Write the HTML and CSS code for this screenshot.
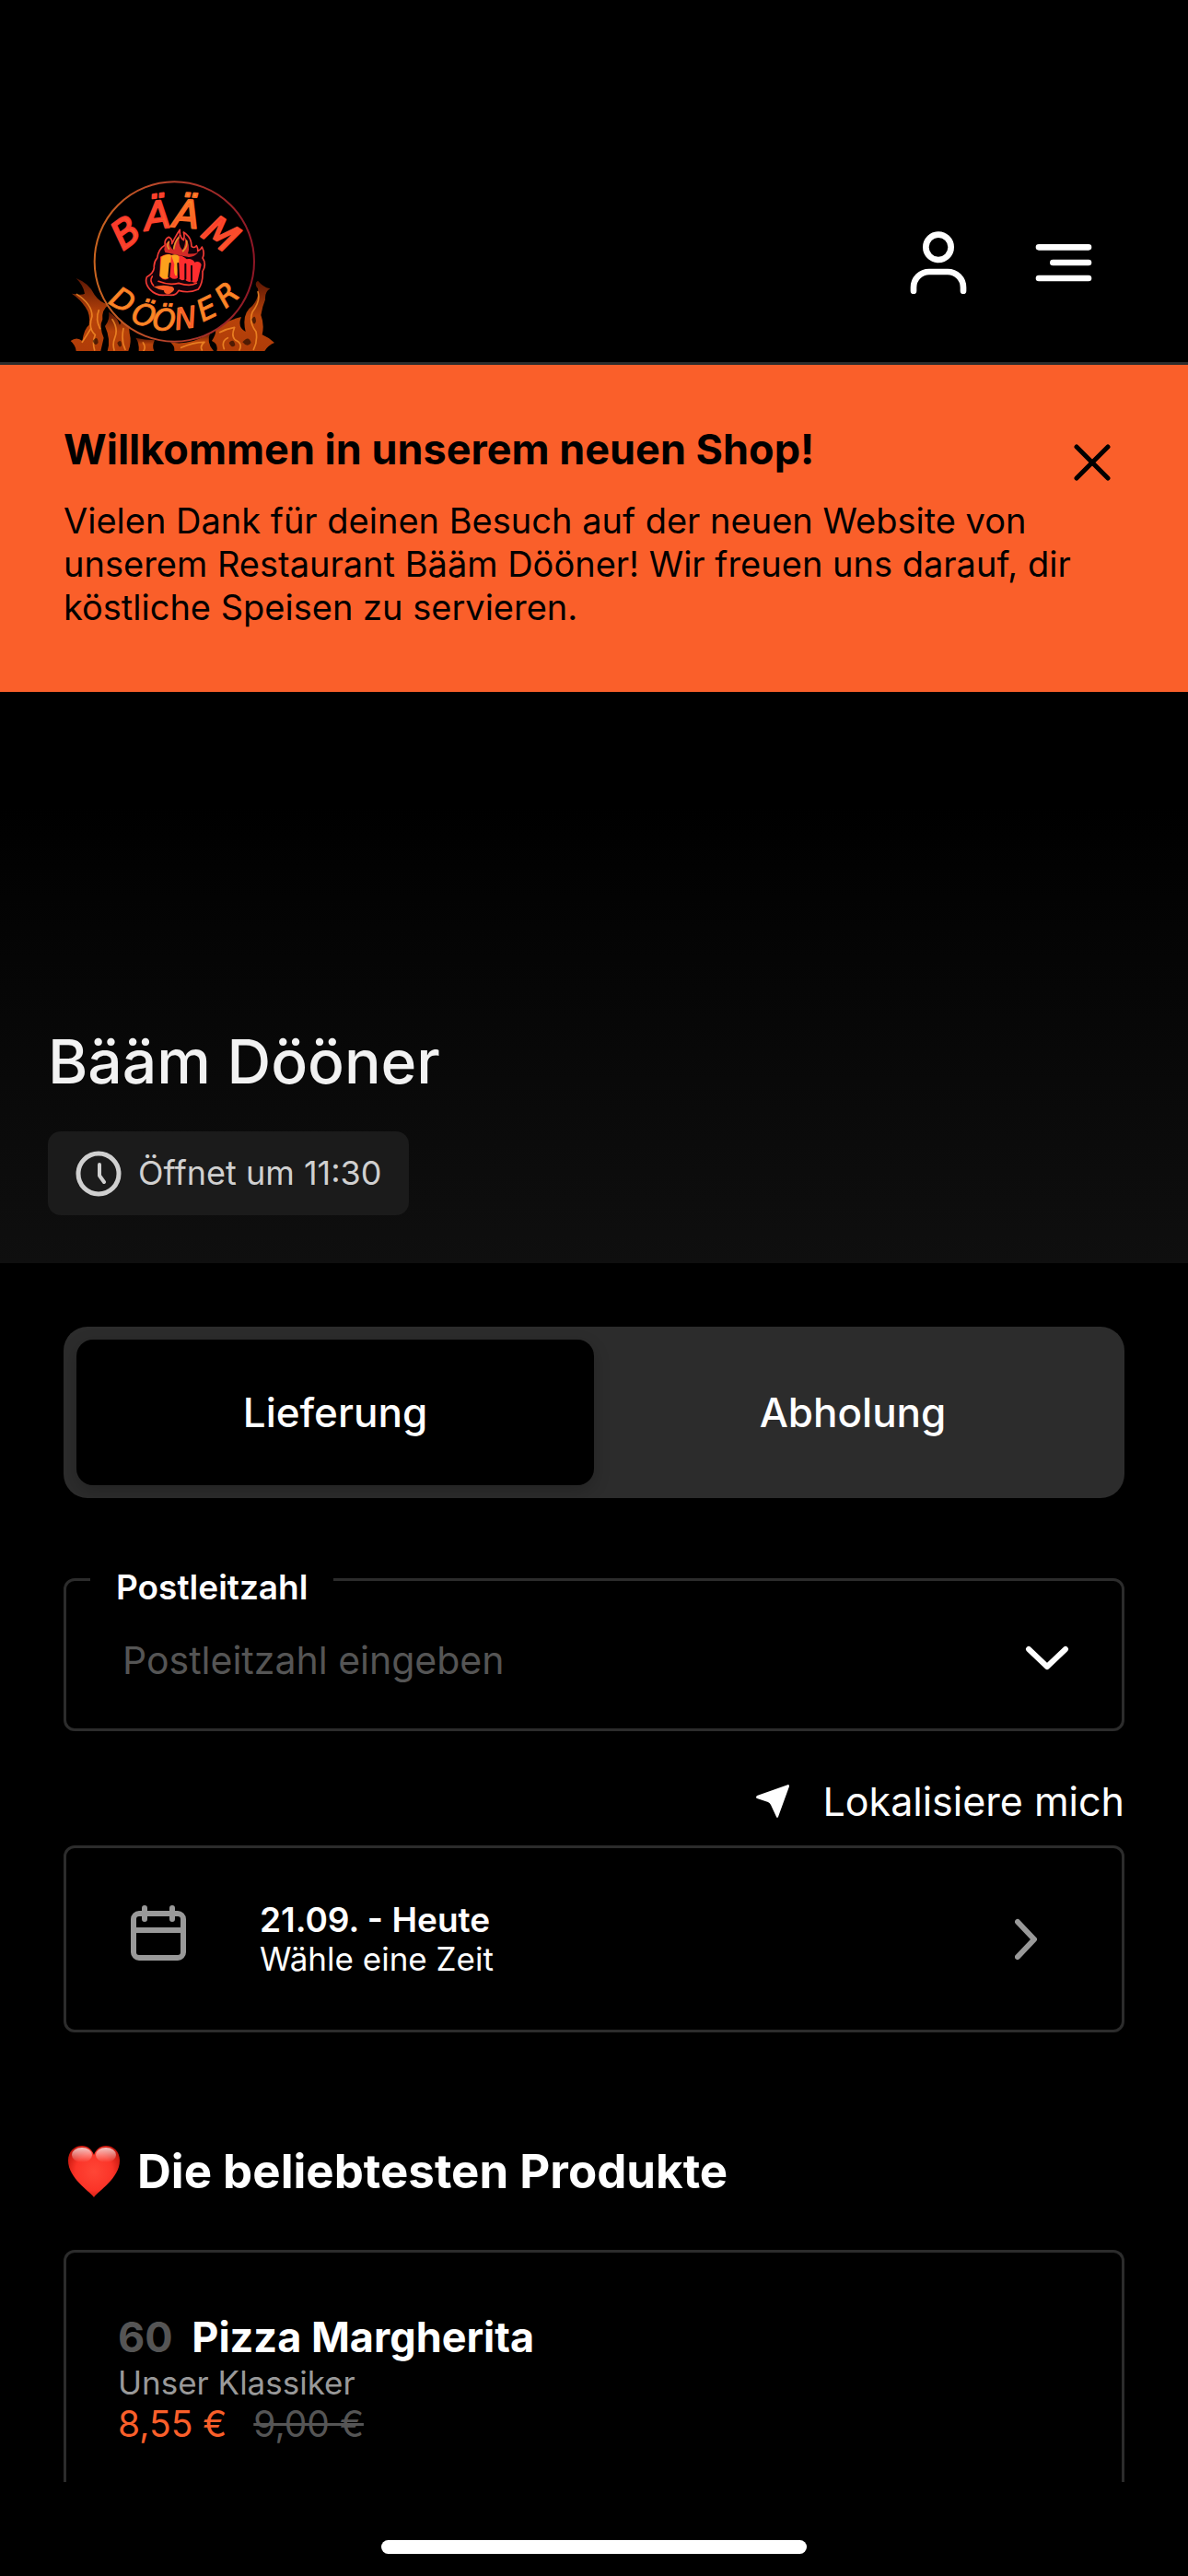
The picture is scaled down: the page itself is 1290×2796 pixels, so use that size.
FILE: index.html
```html
<!DOCTYPE html>
<html lang="de">
<head>
    <meta charset="UTF-8">
    <meta name="viewport" content="width=device-width, initial-scale=1">
    <title>Bääm Dööner</title>
    <link rel="stylesheet" href="styles.css">
</head>
<body>
    <header class="site-header">
        <a class="logo-link" href="#" aria-label="Bääm Dööner">
            <svg class="logo" viewBox="60 78 690 555" aria-hidden="true">
                <defs>
                    <linearGradient id="ring" x1="0" y1="0" x2="1" y2="0">
                        <stop offset="0" stop-color="#c9641f"/>
                        <stop offset="0.45" stop-color="#b8432c"/>
                        <stop offset="1" stop-color="#8e1626"/>
                    </linearGradient>
                    <linearGradient id="flame" x1="0" y1="0" x2="0" y2="1">
                        <stop offset="0" stop-color="#5a1604"/>
                        <stop offset="0.5" stop-color="#b8430a"/>
                        <stop offset="1" stop-color="#b03c08"/>
                    </linearGradient>
                    <linearGradient id="letter" x1="0" y1="0" x2="1" y2="1">
                        <stop offset="0" stop-color="#fb2c2c"/>
                        <stop offset="1" stop-color="#f9682a"/>
                    </linearGradient>
                    <linearGradient id="letterWarm" x1="0" y1="0" x2="0" y2="1">
                        <stop offset="0" stop-color="#fb9a22"/>
                        <stop offset="1" stop-color="#fb3a2a"/>
                    </linearGradient>
                </defs>
                <g fill="url(#flame)">
                    <path d="M80 600 Q100 585 118 600 Q124 560 140 548 Q146 515 128 490 Q112 465 84 446 Q118 452 126 446 Q122 420 98 396 Q140 412 158 450 Q176 476 204 482 Q180 500 184 530 Q172 552 188 590 L178 633 H98 Q96 614 80 600Z"/>
                    <path d="M192 552 Q210 528 204 506 Q232 520 240 548 Q250 530 246 510 Q272 540 272 575 Q280 604 268 633 H200 Q212 596 192 552Z"/>
                    <path d="M292 590 Q320 596 354 598 Q344 616 352 633 H302 Q304 606 292 590Z"/>
                    <path d="M404 604 Q440 612 480 600 Q510 590 536 570 Q520 606 546 633 H418 Q420 616 404 604Z"/>
                    <path d="M540 600 Q560 570 548 556 Q590 534 636 522 Q622 556 650 570 Q636 510 672 486 Q694 460 690 430 Q676 412 690 404 Q706 424 730 430 Q712 440 714 466 Q704 490 700 516 Q712 548 704 580 Q728 590 744 606 Q724 614 712 633 H556 Q562 610 540 600Z"/>
                </g>
                <g fill="none" stroke="#ff9a2c" stroke-width="5" stroke-linecap="round" opacity="0.7">
                    <path d="M100 448 Q150 480 150 520 Q136 560 160 580 Q150 605 158 630"/>
                    <path d="M118 604 Q134 580 146 560 M172 500 Q160 530 176 560"/>
                    <path d="M216 530 Q236 560 224 590 Q216 610 222 630 M252 560 Q244 600 258 628"/>
                    <path d="M316 606 Q326 620 318 632 M440 622 Q480 604 516 604 Q500 616 508 630"/>
                    <path d="M566 572 Q590 560 614 556 Q600 590 622 600 Q640 610 630 630"/>
                    <path d="M690 440 Q700 470 672 506 Q660 540 684 570 Q690 600 676 628 M580 626 Q570 600 592 590"/>
                </g>
                <g fill="#000" opacity="0.55">
                    <path d="M152 600 Q168 580 170 606 Q160 620 152 600Z"/>
                    <path d="M232 606 Q246 590 246 616 Q238 626 232 606Z"/>
                    <path d="M640 604 Q660 580 668 606 Q656 624 640 604Z"/>
                    <path d="M596 606 Q612 590 616 614 Q604 626 596 606Z"/>
                    <path d="M670 530 Q682 510 684 536 Q678 556 670 530Z"/>
                </g>
                <circle cx="418" cy="342" r="260" fill="#000" stroke="url(#ring)" stroke-width="6"/>
                <g class="logo-letters">
                    <text x="-42" y="45" transform="translate(258 246) rotate(-36)" fill="url(#letter)" stroke="#fb3a2c">B</text>
                    <text x="-43" y="45" transform="translate(362 190) rotate(-8)" fill="url(#letter)" stroke="#fb402c">Ä</text>
                    <text x="-43" y="45" transform="translate(458 186) rotate(4)" fill="url(#letterWarm)" stroke="#fb6a26">Ä</text>
                    <text x="-53" y="45" transform="translate(570 250) rotate(34)" fill="url(#letter)" stroke="#fb4a2c">M</text>
                </g>
                <g class="logo-letters logo-letters-small" fill="#f98a22" stroke="#f9782a">
                    <text x="-37" y="35" transform="translate(250 466) rotate(32)">D</text>
                    <text x="-37" y="35" transform="translate(318 514) rotate(14)">Ö</text>
                    <text x="-37" y="35" transform="translate(384 530) rotate(2)">Ö</text>
                    <text x="-36" y="35" transform="translate(454 524) rotate(-8)" fill="#fb5a2a">N</text>
                    <text x="-30" y="35" transform="translate(522 494) rotate(-26)">E</text>
                    <text x="-33" y="35" transform="translate(588 448) rotate(-40)">R</text>
                </g>
                <!-- burning fist -->
                <path d="M362 330 Q366 300 388 288 Q384 270 400 262 Q412 268 410 284 Q420 262 436 238 Q434 262 448 272 Q452 260 448 246 Q474 262 474 292 Q482 300 490 290 Q496 300 494 308 Q504 304 508 294 Q518 314 510 330 Q524 350 510 374 Q512 410 496 432 Q466 446 432 436 Q422 456 396 450 Q360 456 340 434 Q320 414 328 392 Q350 380 352 362 Q350 344 362 330Z" fill="#12020a" stroke="#f23a34" stroke-width="5" stroke-linejoin="round"/>
                <path d="M388 312 Q378 290 402 272 Q400 294 416 304 Q412 280 436 252 Q428 288 444 304 Q456 290 452 262 Q472 288 462 316 Q480 318 496 312 Q480 330 460 326 Q424 320 388 312Z" fill="#d42a26"/>
                <path d="M416 300 Q420 276 432 264 M446 308 Q462 292 458 274 M400 300 Q392 288 400 278" fill="none" stroke="#e0962c" stroke-width="5" stroke-linecap="round"/>
                <path d="M372 326 Q390 314 408 320 L432 322 Q444 322 458 334 Q476 330 484 344 Q500 338 506 352 L494 404 Q486 416 474 406 Q462 412 452 400 Q440 408 430 394 Q418 404 404 392 Q388 410 370 390Z" fill="#fd2c2e"/>
                <path d="M376 326 Q400 312 408 322 L402 392 Q384 406 370 388Z M408 322 Q424 314 434 326 L432 350 L426 388 Q414 390 418 350Z" fill="#fda01c"/>
                <path d="M404 348 L400 392 M430 348 L432 394 M454 350 L454 398 M474 356 L474 402" stroke="#12020a" stroke-width="6" fill="none"/>
                <path d="M350 424 Q384 414 412 424 Q426 434 404 446 Q384 450 384 436 Q366 434 350 424Z" fill="#fb5a26"/>
                <path d="M346 390 Q336 404 350 420 M366 406 Q400 420 432 412 Q470 424 490 412" fill="none" stroke="#fb3a2a" stroke-width="5" stroke-linecap="round"/>
            </svg>
        </a>
        <nav class="header-actions" aria-label="Navigation">
            <button class="icon-button" type="button" aria-label="Konto">
                <svg class="icon-large" viewBox="127 85 216 216" aria-hidden="true">
                    <circle cx="235" cy="143" r="41"/>
                    <path d="M154 285 V274 A51 51 0 0 1 205 223 H265 A51 51 0 0 1 316 274 V285"/>
                </svg>
            </button>
            <button class="icon-button" type="button" aria-label="Menü">
                <svg class="icon-large" viewBox="536 85 216 216" aria-hidden="true">
                    <path d="M563 143 H725 M609 193 H725 M563 244 H725"/>
                </svg>
            </button>
        </nav>
    </header>

    <section class="banner">
        <div class="banner-text">
            <h2>Willkommen in unserem neuen Shop!</h2>
            <p>Vielen Dank für deinen Besuch auf der neuen Website von unserem Restaurant Bääm Dööner! Wir freuen uns darauf, dir köstliche Speisen zu servieren.</p>
        </div>
        <button class="icon-button banner-close" type="button" aria-label="Schließen">
            <svg viewBox="0 0 48 48" aria-hidden="true"><path d="M7 7 L41 41 M41 7 L7 41"/></svg>
        </button>
    </section>

    <section class="hero">
        <h1>Bääm Dööner</h1>
        <div class="opening">
            <svg viewBox="0 0 50 50" aria-hidden="true">
                <circle cx="25" cy="25" r="22"/>
                <path class="clock-hands" d="M26 15 V27 L31 34"/>
            </svg>
            <span>Öffnet um 11:30</span>
        </div>
    </section>

    <main>
        <div class="segment">
            <button class="segment-item active" type="button">Lieferung</button>
            <button class="segment-item" type="button">Abholung</button>
        </div>

        <div class="field">
            <label for="plz">Postleitzahl</label>
            <input id="plz" name="plz" type="text" placeholder="Postleitzahl eingeben">
            <svg class="field-arrow" viewBox="0 0 48 48" aria-hidden="true"><path d="M4 14 L24 33 L44 14"/></svg>
        </div>

        <button class="locate" type="button">
            <svg viewBox="0 0 36 36" aria-hidden="true"><path d="M35 0 Q36 0 36 2 L24 35 Q23 37 22 35 L16 22 Q15 20 13 19 L1 15 Q-1 14 1 12Z"/></svg>
            <span>Lokalisiere mich</span>
        </button>

        <button class="time-card" type="button">
            <svg class="calendar" viewBox="0 0 60 60" aria-hidden="true">
                <rect x="3" y="9" width="54" height="48" rx="6"/>
                <path d="M3 27 H57 M15 3 V15 M45 3 V15"/>
            </svg>
            <span class="time-text">
                <strong>21.09. - Heute</strong>
                <span>Wähle eine Zeit</span>
            </span>
            <svg class="time-arrow" viewBox="0 0 24 48" aria-hidden="true"><path d="M3 5 L21 24 L3 43"/></svg>
        </button>

        <h2 class="section-title">
            <svg viewBox="0 0 58 58" aria-hidden="true">
                <defs>
                    <radialGradient id="heart" cx="0.5" cy="0.5" r="0.6">
                        <stop offset="0" stop-color="#ff4636"/>
                        <stop offset="0.6" stop-color="#fb3428"/>
                        <stop offset="1" stop-color="#c0140a"/>
                    </radialGradient>
                    <linearGradient id="shine" x1="0" y1="0" x2="0" y2="1">
                        <stop offset="0" stop-color="#fff" stop-opacity="0.75"/>
                        <stop offset="1" stop-color="#fff" stop-opacity="0"/>
                    </linearGradient>
                </defs>
                <path fill="url(#heart)" d="M29 57 C24 50 1 36 1 17 C1 7 8 1 16 1 C22 1 27 5 29 11 C31 5 36 1 42 1 C50 1 57 7 57 17 C57 36 34 50 29 57Z"/>
                <ellipse cx="16" cy="11" rx="11" ry="8" fill="url(#shine)"/>
                <ellipse cx="42" cy="11" rx="11" ry="8" fill="url(#shine)"/>
            </svg>
            Die beliebtesten Produkte
        </h2>

        <article class="product">
            <h3><span class="product-number">60</span> Pizza Margherita</h3>
            <p class="product-info">Unser Klassiker</p>
            <p class="product-price"><span>8,55 €</span> <s>9,00 €</s></p>
        </article>
    </main>

    <footer class="home-bar"><span></span></footer>
</body>
</html>
```
FILE: styles.css
```css
* {
    margin: 0;
    padding: 0;
    box-sizing: border-box;
}

body {
    min-height: 100vh;
    display: flex;
    flex-direction: column;
    background: #000;
    color: #fff;
    font-family: Inter, "Liberation Sans", sans-serif;
    font-size: 36px;
}

button {
    font: inherit;
    color: inherit;
    background: none;
    border: none;
    cursor: pointer;
}

svg {
    display: block;
    flex: none;
    fill: none;
    stroke-linecap: round;
    stroke-linejoin: round;
}

/* Header */
.site-header {
    display: flex;
    justify-content: space-between;
    align-items: center;
    padding: 196px 99px 12px 70px;
    border-bottom: 3px solid #2c2c2c;
}
.logo { width: 230px; height: 185px; }
.logo-letters {
    font-family: "DejaVu Sans", sans-serif;
    font-style: oblique;
    font-size: 124px;
    stroke-width: 6px;
}
.logo-letters-small { font-size: 96px; stroke-width: 3px; }
.header-actions { display: flex; gap: 64px; margin-bottom: 8px; }
.icon-large {
    width: 72px;
    height: 72px;
    stroke: #fff;
    stroke-width: 20;
}

/* Welcome banner */
.banner {
    display: flex;
    justify-content: space-between;
    align-items: flex-start;
    padding: 64px 80px 68px 69px;
    background: #fa5f2a;
    color: #000;
}
.banner-text { width: 1104px; }
.banner h2 {
    font-size: 45px;
    line-height: 56px;
    font-weight: 700;
    margin-bottom: 26px;
}
.banner p { font-size: 38px; line-height: 47px; }
.banner-close { margin-top: 18px; margin-left: -48px; }
.banner-close svg {
    width: 48px;
    height: 48px;
    stroke: #000;
    stroke-width: 5;
}

/* Hero */
.hero {
    display: flex;
    flex-direction: column;
    align-items: flex-start;
    justify-content: flex-end;
    gap: 34px;
    min-height: 620px;
    padding: 52px;
    background: linear-gradient(#000 20%, #0f0f0f);
}
.hero h1 {
    color: #f2f2f2;
    font-size: 66px;
    line-height: 84px;
    font-weight: 500;
}
.opening {
    display: flex;
    align-items: center;
    gap: 18px;
    padding: 20px 30px;
    background: #1b1b1b;
    border-radius: 14px;
    color: #d0d0d0;
    line-height: 51px;
}
.opening svg {
    width: 50px;
    height: 50px;
    stroke: #d0d0d0;
    stroke-width: 5;
}
.clock-hands { stroke-width: 4; }

/* Order options */
main { padding: 69px 69px 0; }
.segment {
    display: grid;
    grid-template-columns: 1fr 1fr;
    padding: 14px;
    background: #2c2c2c;
    border-radius: 26px;
}
.segment-item {
    height: 158px;
    border-radius: 18px;
    font-size: 44px;
    font-weight: 500;
}
.segment-item.active { background: #000; box-shadow: 0 6px 18px rgba(0, 0, 0, 0.2); }

.field { position: relative; margin-top: 87px; }
.field label {
    position: absolute;
    top: -12px;
    left: 29px;
    padding: 0 28px;
    background: #000;
    font-size: 37px;
    line-height: 44px;
    font-weight: 600;
}
.field input {
    display: block;
    width: 100%;
    height: 166px;
    padding: 12px 140px 0 61px;
    background: none;
    border: 3px solid #2c2c2c;
    border-radius: 12px;
    outline: none;
    color: #fff;
    font: inherit;
    font-size: 41px;
}
.field input::placeholder { color: #555; opacity: 1; }
.field-arrow {
    position: absolute;
    right: 60px;
    top: 63px;
    width: 48px;
    height: 48px;
    stroke: #fff;
    stroke-width: 6;
    pointer-events: none;
}

.locate {
    display: flex;
    align-items: center;
    gap: 36px;
    margin: 48px 0 20px auto;
    font-size: 43px;
    line-height: 56px;
}
.locate svg { width: 36px; height: 36px; fill: #fff; }

.time-card,
.product {
    border: 3px solid #2c2c2c;
    border-radius: 12px;
}
.time-card {
    display: flex;
    align-items: center;
    width: 100%;
    height: 203px;
    padding: 0 92px 0 70px;
    text-align: left;
}
.calendar { width: 60px; height: 60px; margin-bottom: 14px; }
.calendar,
.time-arrow { stroke: #999; stroke-width: 6; }
.time-arrow { width: 24px; height: 48px; margin-left: auto; }
.time-text { margin-left: 80px; font-size: 35px; line-height: 43px; }
.time-text strong,
.time-text span { display: block; }
.time-text strong { font-size: 37px; font-weight: 600; }

/* Products */
.section-title {
    display: flex;
    align-items: center;
    gap: 18px;
    margin: 116px 0 50px;
    padding-left: 4px;
    font-size: 51px;
    line-height: 70px;
    font-weight: 700;
}
.section-title svg { width: 58px; height: 58px; }

.product {
    height: 252px;
    padding: 64px 56px 0;
    border-bottom: none;
    border-radius: 12px 12px 0 0;
}
.product h3 { font-size: 45px; line-height: 56px; font-weight: 700; }
.product-number { margin-right: 10px; color: #555; }
.product-info { color: #999; font-size: 35px; line-height: 43px; }
.product-price { font-size: 39px; line-height: 46px; color: #fa5f2a; }
.product-price s { margin-left: 18px; color: #555; }

.home-bar {
    display: flex;
    justify-content: center;
    margin-top: auto;
    padding-bottom: 24px;
}
.home-bar span {
    width: 462px;
    height: 15px;
    border-radius: 8px;
    background: #fff;
}
```
